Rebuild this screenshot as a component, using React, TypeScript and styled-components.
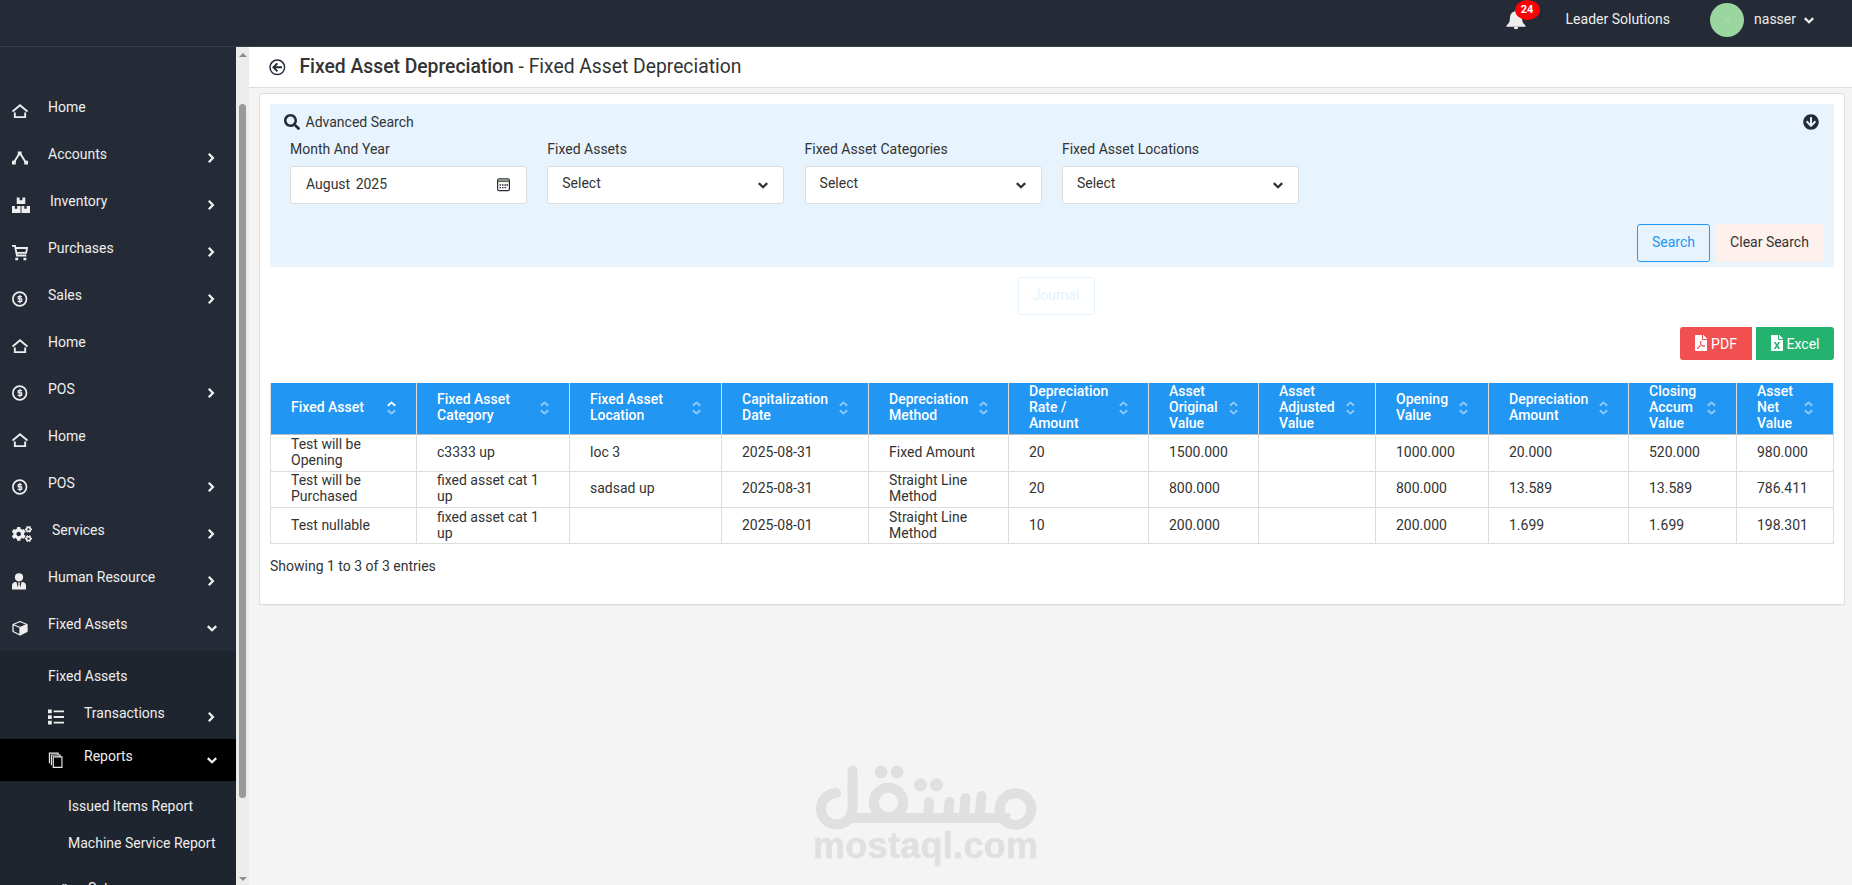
import React from "react";
import styled, { createGlobalStyle, css } from "styled-components";
import { FaArrowCircleDown, FaCogs, FaFileExcel, FaFilePdf, FaSearch } from "react-icons/fa";

const GlobalStyle = createGlobalStyle`
  *, *::before, *::after { box-sizing: border-box; }
  html, body { margin: 0; padding: 0; }
  body {
    font-family: Roboto, "Liberation Sans", sans-serif;
    font-size: 14px;
    line-height: 20px;
    color: #333;
    background: #f4f4f4;
    overflow: hidden;
  }
`;

const Page = styled.div`
  width: 100%;
  height: 100vh;
  display: flex;
  flex-direction: column;
  overflow: hidden;
`;

/* ---------- top bar ---------- */

const TopBar = styled.header`
  flex: none;
  height: 47px;
  background: #252b36;
  border-bottom: 1px solid #3b3f4c;
  color: #eee;
  display: flex;
  justify-content: flex-end;
  align-items: flex-start;
  padding: 0 38px 0 0;
`;

const BellWrap = styled.div`
  position: relative;
  width: 20px;
  margin: 10px 40px 0 0;
  height: 20px;
  svg { display: block; }
`;

const Badge = styled.span`
  position: absolute;
  left: 9px;
  top: -10px;
  width: 25px;
  height: 20px;
  border-radius: 50%;
  background: #fb0207;
  color: #fff;
  font-size: 11px;
  font-weight: 700;
  line-height: 19px;
  text-align: center;
`;

const Company = styled.span`
  margin: 9px 40px 0 0;
`;

const Avatar = styled.span`
  width: 34px;
  height: 34px;
  margin: 3px 10px 0 0;
  border-radius: 50%;
  background: #9bd6a0;
  display: flex;
  align-items: center;
  justify-content: center;
`;

const UserName = styled.span`
  margin: 9px 8px 0 0;
`;

const UserCaret = styled.span`
  margin-top: 17px;
  line-height: 0;
`;

/* ---------- sidebar ---------- */

const Body = styled.div`
  flex: 1;
  min-height: 0;
  display: flex;
`;

const Sidebar = styled.nav`
  flex: none;
  width: 236px;
  padding-top: 40px;
  background: #252b36;
  color: #eee;
  overflow: hidden;
`;

const rowBase = css`
  display: flex;
  align-items: flex-start;
  white-space: nowrap;
`;

const NavRow = styled.div`
  ${rowBase}
  height: 47px;
  padding: 10px 19px 0 12px;
`;

const NavIcon = styled.span<{ $w?: number }>`
  flex: none;
  width: ${(p) => p.$w ?? 16}px;
  height: 16px;
  margin: 6px 20px 0 0;
  line-height: 0;
  display: flex;
  align-items: center;
`;

const NavLabel = styled.span`
  flex: 1;
`;

const Caret = styled.span<{ $down?: boolean }>`
  width: 10px;
  height: 10px;
  margin: 9px ${(p) => (p.$down ? 0 : 1)}px 0 0;
  line-height: 0;
  display: flex;
  align-items: center;
  justify-content: center;
`;

const SubMenu = styled.div`
  background: #1f252e;
  padding-top: 7px;
  height: 300px;
`;

const SubLink = styled.div<{ $level?: number }>`
  height: ${(p) => (p.$level === 3 ? 37 : 36)}px;
  padding: 8px 0 0 ${(p) => (p.$level === 3 ? 68 : 48)}px;
  white-space: nowrap;
`;

const SubRow = styled.div<{ $active?: boolean }>`
  ${rowBase}
  height: ${(p) => (p.$active ? 42 : 45)}px;
  padding: ${(p) => (p.$active ? 7 : 9)}px 19px 0 48px;
  background: ${(p) => (p.$active ? "#000" : "transparent")};
`;

const ThirdLevel = styled.div`
  padding-top: 7px;
  height: 88px;
`;

const ScrollTrack = styled.div`
  flex: none;
  width: 13px;
  background: #ececec;
  display: flex;
  flex-direction: column;
  align-items: center;
  padding: 6px 0 4px;
`;

const ScrollArrow = styled.span<{ $down?: boolean }>`
  width: 0;
  height: 0;
  border: 4px solid transparent;
  border-top-width: ${(p) => (p.$down ? 4 : 0)}px;
  border-bottom-width: ${(p) => (p.$down ? 0 : 4)}px;
  ${(p) => (p.$down ? "border-top-color" : "border-bottom-color")}: #8d8d8d;
`;

const ScrollThumb = styled.span`
  width: 7px;
  height: 694px;
  margin: 47px 0 auto;
  border-radius: 4px;
  background: #999;
`;

/* ---------- content ---------- */

const Main = styled.main`
  flex: 1;
  min-width: 0;
`;

const PageHeader = styled.div`
  height: 41px;
  background: #fff;
  border-bottom: 1px solid #ddd;
  display: flex;
  align-items: flex-start;
  padding-left: 19.500px;
`;

const BackIcon = styled.span`
  margin: 12px 14px 0 0;
  line-height: 0;
`;

const Title = styled.h1`
  margin: 8px 0 0;
  font-size: 19.3px;
  line-height: 24px;
  font-weight: 400;
  b { font-weight: 500; }
`;

const Card = styled.section`
  height: 512px;
  margin: 5px 7px 0 10px;
  padding: 10px;
  background: #fff;
  border: 1px solid #ddd;
  border-radius: 3px;
  box-shadow: 0 1px 1px rgba(0, 0, 0, 0.05);
`;

const SearchPanel = styled.div`
  height: 163px;
  background: #e7f4fe;
  padding: 8px 10px 0 14px;
`;

const PanelTitle = styled.div`
  display: flex;
  align-items: center;
  height: 20px;
  gap: 5.500px;
`;

const Toggle = styled.span`
  margin: 0 5px 0 auto;
  color: #252b36;
  line-height: 0;
`;

const Fields = styled.div`
  display: grid;
  grid-template-columns: repeat(4, 237px);
  column-gap: 20.300px;
  padding: 7px 0 0 6px;
`;

const FieldLabel = styled.label`
  display: block;
  margin-bottom: 7px;
`;

const Control = styled.div<{ $select?: boolean }>`
  height: 38px;
  background: #fff;
  border: 1px solid #ddd;
  border-radius: 3px;
  display: flex;
  justify-content: space-between;
  align-items: center;
  padding: 0 ${(p) => (p.$select ? 15 : 16)}px ${(p) => (p.$select ? 4 : 2)}px ${(p) => (p.$select ? 14 : 15)}px;
  word-spacing: ${(p) => (p.$select ? 0 : 2)}px;
  svg { display: block; margin-top: ${(p) => (p.$select ? 4 : 1)}px; }
`;

const Actions = styled.div<{ $top: number; $center?: boolean; $gap?: number }>`
  display: flex;
  justify-content: ${(p) => (p.$center ? "center" : "flex-end")};
  padding-left: ${(p) => (p.$center ? 8 : 0)}px;
  gap: ${(p) => p.$gap ?? 0}px;
  margin-top: ${(p) => p.$top}px;
`;

const tones = {
  primary: css`color: #2196f3; border-color: #2196f3; background: #e7f4fe;`,
  soft: css`color: #333; border-color: #fdf0ed; background: #fdf0ed;`,
  ghost: css`color: #e3f2fd; border-color: #e3f2fd; background: #fff;`,
};

const Button = styled.button<{ $tone: keyof typeof tones; $w: number }>`
  width: ${(p) => p.$w}px;
  height: 38px;
  padding: 0 0 2px;
  border: 1px solid;
  border-radius: 3px;
  font: inherit;
  ${(p) => tones[p.$tone]}
`;

const ExportButton = styled.button<{ $color: string; $w: number; $side: "left" | "right" }>`
  width: ${(p) => p.$w}px;
  height: 33px;
  padding: 1px 2px 0 0;
  border: 0;
  border-radius: ${(p) => (p.$side === "left" ? "3px 0 0 3px" : "0 3px 3px 0")};
  background: ${(p) => p.$color};
  color: #fff;
  font: inherit;
  display: flex;
  align-items: center;
  justify-content: center;
  gap: 2px;
  svg { margin-top: -2px; }
`;

const Table = styled.table`
  table-layout: fixed;
  width: 1564px;
  margin-top: 23px;
  border-spacing: 0;
  border-collapse: separate;
  line-height: 16px;
`;

const Th = styled.th`
  height: 52px;
  padding: 0 20px 3px;
  background: #2196f3;
  color: #fff;
  font-weight: 500;
  text-align: left;
  vertical-align: middle;
  border-right: 1px solid #ddd;
  border-bottom: 1px solid #bbb;
  &:first-child { border-left: 1px solid #ddd; }
`;

const ThInner = styled.div`
  display: flex;
  align-items: center;
  justify-content: space-between;
  white-space: pre-line;
  svg { flex: none; margin-top: 2px; }
`;

const Td = styled.td<{ $h: number; $lift: number }>`
  height: ${(p) => p.$h}px;
  padding: 0 20px ${(p) => p.$lift}px;
  vertical-align: middle;
  border-right: 1px solid #ddd;
  border-bottom: 1px solid #ddd;
  white-space: pre-line;
  &:first-child { border-left: 1px solid #ddd; }
`;

const Summary = styled.div`
  margin-top: 12px;
`;

const Watermark = styled.svg`
  position: fixed;
  left: 810px;
  top: 760px;
`;

/* ---------- icons ---------- */

const Chevron = ({ down, size = 10 }: { down?: boolean; size?: number }) => (
  <svg width={size} height={down ? size * 0.7 : size} viewBox={down ? "0 0 10 7" : "0 0 7 10"} fill="none" stroke="currentColor" strokeWidth="2.300">
    <path d={down ? "M.8 1.100 5 5.200 9.200 1.100" : "M1.300.8 5.400 5 1.300 9.200"} />
  </svg>
);

const HomeIcon = () => (
  <svg width="17" height="16" viewBox="0 0 17 16" fill="none" stroke="currentColor" strokeWidth="2">
    <path d="M.6 8.600 8.500 1.800l7.900 6.800M3 9.500v5h11v-5" />
  </svg>
);

const NodesIcon = () => (
  <svg width="17" height="16" viewBox="0 0 17 16" fill="currentColor">
    <path d="M6.200 1h4v4h-4zM0 11h4v4H0zM13 11h4v4h-4z" />
    <path d="M7.400 4 2.400 12M9.200 4l5 8" stroke="currentColor" strokeWidth="2" />
  </svg>
);

const BoxesIcon = () => (
  <svg width="19" height="17" viewBox="0 0 19 17" fill="currentColor">
    <path d="M5 0h3v3h3V0h3v7H5zM0 9h3v3h2.500V9H9v7.500H0zM10 9h3v3h2.500V9H19v7.500h-9z" />
  </svg>
);

const DollarIcon = () => (
  <svg width="16" height="16" viewBox="0 0 16 16" fill="none" stroke="currentColor">
    <circle cx="7.700" cy="8" r="6.800" strokeWidth="1.700" />
    <path d="M10 5.700H6.200v2.200h3.500v2.500H5.600M7.900 3.800v8.400" strokeWidth="1.200" />
  </svg>
);

const CartIcon = () => (
  <svg width="17" height="17" viewBox="0 0 17 17" fill="none" stroke="currentColor" strokeWidth="1.900">
    <path d="M0 1.500h3.200l2 10.200h10M4 3.700h12l-1 5.300H5" />
    <path d="M3.500 14h3v2.700h-3zM12.200 14h3v2.700h-3z" fill="currentColor" stroke="none" />
  </svg>
);

const CubeIcon = () => (
  <svg width="16" height="16" viewBox="0 0 16 16">
    <path d="M8 1.500 15 4.500v7L8 15 1 11.500v-7zM1 4.500 8 7.500l7-3M8 7.500V15" fill="none" stroke="currentColor" strokeWidth="1.300" strokeLinejoin="round" />
    <path d="M8 7.500l7-3v7L8 15z" fill="currentColor" />
  </svg>
);

const PersonIcon = () => (
  <svg width="15" height="17" viewBox="0 0 15 17" fill="currentColor">
    <circle cx="7" cy="4.300" r="4.100" />
    <path d="M0 16.500v-4C0 10.400 1.600 9 3.700 9h.8l1.200 5.500.7-3.500-.5-1.600h2.200L7.600 11l.7 3.500L9.500 9h.8c2.100 0 3.700 1.400 3.700 3.500v4z" />
  </svg>
);

const ListIcon = () => (
  <svg width="17" height="17" viewBox="0 0 17 17" fill="currentColor">
    <path d="M0 0h4v4H0zM0 6h4v4H0zM0 12h4v4H0zM6 1h11v2H6zM6 7h11v2H6zM6 13h11v2H6z" />
  </svg>
);

const CopiesIcon = () => (
  <svg width="17" height="17" viewBox="0 0 17 17" fill="none" stroke="currentColor" strokeWidth="1.200">
    <path d="M5.600 4.600h9.200v11.200H5.600zM3.600 13.500V2.600h9.200v2M1.500 11.500V.7h9.200v1.900" />
  </svg>
);

const BellIcon = () => (
  <svg width="20" height="20" viewBox="0 0 20 20" fill="currentColor">
    <path d="M10 0a1.500 1.500 0 0 1 1.500 1.500C14.500 2.200 16 4.500 16 7.500c0 4 1 5.700 2.600 7.100.5.400 1.100 1.400 1.100 2.200H.3c0-.8.6-1.800 1.100-2.200C3 13.200 4 11.500 4 7.500c0-3 1.500-5.300 4.500-6A1.500 1.500 0 0 1 10 0z" />
    <path d="M7.800 17h4.400a2.200 2.200 0 0 1-4.400 0z" />
  </svg>
);

const BackArrow = () => (
  <svg width="17" height="17" viewBox="0 0 17 17" fill="none" stroke="#252b36">
    <circle cx="8.300" cy="8.300" r="7.300" strokeWidth="1.500" />
    <path d="M13 8.300H4.500M8.400 4.300l-4 4 4 4" strokeWidth="1.900" />
  </svg>
);

const CalendarIcon = () => (
  <svg width="13" height="14" viewBox="0 0 13 14" fill="none" stroke="#2b2b33">
    <rect x=".6" y=".9" width="11.800" height="11.800" rx="1.500" strokeWidth="1.200" />
    <path d="M1 3.200h11" stroke="#63765f" strokeWidth="2" />
    <path d="M5 7h1.500M7.500 7H9M9.500 7H11M2.500 9.700H4M5 9.700h1.500M7.500 9.700H9M2.500 7H4" strokeWidth="1.300" />
  </svg>
);

const SortIcon = ({ asc }: { asc?: boolean }) => (
  <svg width="9" height="14" viewBox="0 0 9 14" fill="none" stroke="#fff" strokeWidth="1.900">
    <path d="M.8 4.700 4.500 1.400l3.700 3.300" opacity={asc ? 1 : 0.5} />
    <path d="M.8 9.300l3.700 3.300 3.700-3.300" opacity="0.5" />
  </svg>
);

/* ---------- data ---------- */

type NavItem = { label: string; icon: React.ReactNode; iconWidth?: number; caret?: "right" | "down" };

const navItems: NavItem[] = [
  { label: "Home", icon: <HomeIcon /> },
  { label: "Accounts", icon: <NodesIcon />, caret: "right" },
  { label: "Inventory", icon: <BoxesIcon />, iconWidth: 18, caret: "right" },
  { label: "Purchases", icon: <CartIcon />, caret: "right" },
  { label: "Sales", icon: <DollarIcon />, caret: "right" },
  { label: "Home", icon: <HomeIcon /> },
  { label: "POS", icon: <DollarIcon />, caret: "right" },
  { label: "Home", icon: <HomeIcon /> },
  { label: "POS", icon: <DollarIcon />, caret: "right" },
  { label: "Services", icon: <FaCogs size={20} />, iconWidth: 20, caret: "right" },
  { label: "Human Resource", icon: <PersonIcon />, caret: "right" },
  { label: "Fixed Assets", icon: <CubeIcon />, caret: "down" },
];

const columns: [string, number][] = [
  ["Fixed Asset", 147],
  ["Fixed Asset\nCategory", 153],
  ["Fixed Asset\nLocation", 152],
  ["Capitalization\nDate", 147],
  ["Depreciation\nMethod", 140],
  ["Depreciation\nRate /\nAmount", 140],
  ["Asset\nOriginal\nValue", 110],
  ["Asset\nAdjusted\nValue", 117],
  ["Opening\nValue", 113],
  ["Depreciation\nAmount", 140],
  ["Closing\nAccum\nValue", 108],
  ["Asset\nNet\nValue", 97],
];

const rows = [
  ["Test will be\nOpening", "c3333 up", "loc 3", "2025-08-31", "Fixed Amount", "20", "1500.000", "", "1000.000", "20.000", "520.000", "980.000"],
  ["Test will be\nPurchased", "fixed asset cat 1\nup", "sadsad up", "2025-08-31", "Straight Line\nMethod", "20", "800.000", "", "800.000", "13.589", "13.589", "786.411"],
  ["Test nullable", "fixed asset cat 1\nup", "", "2025-08-01", "Straight Line\nMethod", "10", "200.000", "", "200.000", "1.699", "1.699", "198.301"],
];

const rowMetrics = [
  { height: 37, lift: 3 },
  { height: 36, lift: 3 },
  { height: 36, lift: 2 },
];

const selects = ["Fixed Assets", "Fixed Asset Categories", "Fixed Asset Locations"];

export default function App() {
  return (
    <Page>
      <GlobalStyle />
      <TopBar>
        <BellWrap>
          <BellIcon />
          <Badge>24</Badge>
        </BellWrap>
        <Company>Leader Solutions</Company>
        <Avatar>
          <svg width="6" height="6" viewBox="0 0 6 6" stroke="#c9dfca" strokeWidth="1" strokeDasharray="1 1">
            <path d="M0 0l6 6M6 0L0 6" />
          </svg>
        </Avatar>
        <UserName>nasser</UserName>
        <UserCaret><Chevron down /></UserCaret>
      </TopBar>

      <Body>
        <Sidebar>
          {navItems.map((item, i) => (
            <NavRow key={i}>
              <NavIcon $w={item.iconWidth}>{item.icon}</NavIcon>
              <NavLabel>{item.label}</NavLabel>
              {item.caret && (
                <Caret $down={item.caret === "down"}><Chevron down={item.caret === "down"} /></Caret>
              )}
            </NavRow>
          ))}
          <SubMenu>
            <SubLink>Fixed Assets</SubLink>
            <SubRow>
              <NavIcon><ListIcon /></NavIcon>
              <NavLabel>Transactions</NavLabel>
              <Caret><Chevron /></Caret>
            </SubRow>
            <SubRow $active>
              <NavIcon><CopiesIcon /></NavIcon>
              <NavLabel>Reports</NavLabel>
              <Caret $down><Chevron down /></Caret>
            </SubRow>
            <ThirdLevel>
              <SubLink $level={3}>Issued Items Report</SubLink>
              <SubLink $level={3}>Machine Service Report</SubLink>
            </ThirdLevel>
            <SubRow>
              <NavIcon $w={20}><FaCogs size={20} /></NavIcon>
              <NavLabel>Setup</NavLabel>
            </SubRow>
          </SubMenu>
        </Sidebar>
        <ScrollTrack>
          <ScrollArrow />
          <ScrollThumb />
          <ScrollArrow $down />
        </ScrollTrack>

        <Main>
          <PageHeader>
            <BackIcon><BackArrow /></BackIcon>
            <Title><b>Fixed Asset Depreciation</b> - Fixed Asset Depreciation</Title>
          </PageHeader>
          <Card>
            <SearchPanel>
              <PanelTitle>
                <FaSearch size={16} color="#252b36" />
                Advanced Search
                <Toggle><FaArrowCircleDown size={16} /></Toggle>
              </PanelTitle>
              <Fields>
                <div>
                  <FieldLabel>Month And Year</FieldLabel>
                  <Control>August 2025<CalendarIcon /></Control>
                </div>
                {selects.map((label) => (
                  <div key={label}>
                    <FieldLabel>{label}</FieldLabel>
                    <Control $select>Select<Chevron down /></Control>
                  </div>
                ))}
              </Fields>
              <Actions $top={20} $gap={5}>
                <Button $tone="primary" $w={73}>Search</Button>
                <Button $tone="soft" $w={109}>Clear Search</Button>
              </Actions>
            </SearchPanel>
            <Actions $top={10} $center>
              <Button $tone="ghost" $w={77}>Journal</Button>
            </Actions>
            <Actions $top={12} $gap={4}>
              <ExportButton $color="#f05050" $w={72} $side="left"><FaFilePdf size={16} />PDF</ExportButton>
              <ExportButton $color="#25b26f" $w={78} $side="right"><FaFileExcel size={16} />Excel</ExportButton>
            </Actions>
            <Table>
              <colgroup>
                {columns.map(([name, width]) => <col key={name} width={width} />)}
              </colgroup>
              <thead>
                <tr>
                  {columns.map(([name], i) => (
                    <Th key={name}>
                      <ThInner>{name}<SortIcon asc={i === 0} /></ThInner>
                    </Th>
                  ))}
                </tr>
              </thead>
              <tbody>
                {rows.map((row, r) => (
                  <tr key={r}>
                    {row.map((cell, c) => (
                      <Td key={c} $h={rowMetrics[r].height} $lift={rowMetrics[r].lift}>{cell}</Td>
                    ))}
                  </tr>
                ))}
              </tbody>
            </Table>
            <Summary>Showing 1 to 3 of 3 entries</Summary>
          </Card>
        </Main>
      </Body>

      <Watermark width="232" height="110" viewBox="0 0 232 110" fill="none" stroke="#e0e0e0" strokeWidth="10" strokeLinecap="round">
        <path d="M26 33A15.800 15.800 0 1 0 42.500 49V10.500" />
        <path d="M42 58H200" strokeLinecap="butt" />
        <circle cx="78.500" cy="42.500" r="14.700" />
        <circle cx="205.500" cy="49" r="15.800" />
        <path d="M118 56l1-14M138 56l1.500-14M154 56l1.500-18M169.500 56l2-20" />
        <g fill="#e0e0e0" stroke="none">
          <circle cx="71" cy="12" r="6.500" />
          <circle cx="87" cy="12" r="6.500" />
          <circle cx="110.500" cy="25" r="6.500" />
          <circle cx="126.500" cy="25" r="6.500" />
        </g>
        <text x="3" y="98" fill="#e0e0e0" strokeWidth="0.600" strokeLinejoin="round" fontFamily="Liberation Sans, sans-serif" fontWeight="700" fontSize="36" textLength="225">mostaql.com</text>
      </Watermark>
    </Page>
  );
}
